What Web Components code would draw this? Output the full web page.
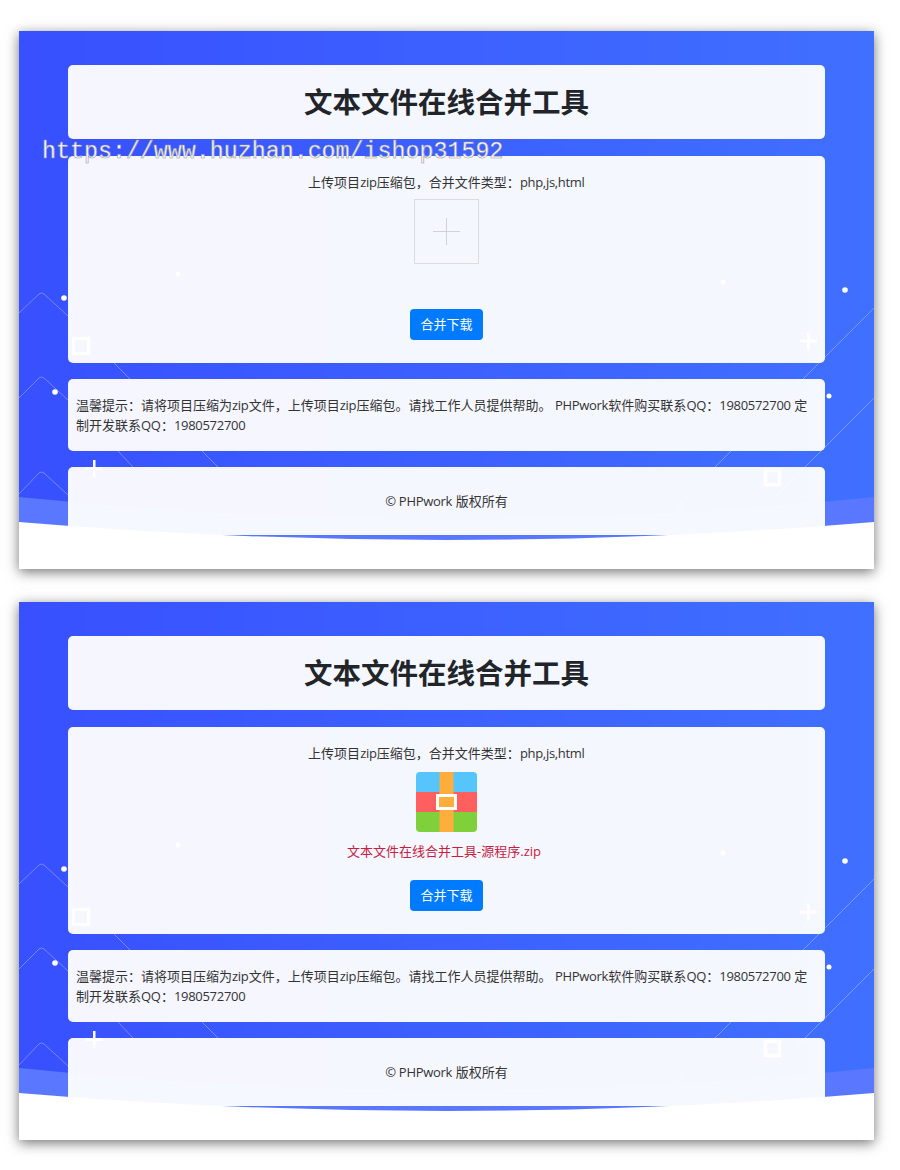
<!DOCTYPE html>
<html lang="zh">
<head>
<meta charset="utf-8">
<title>文本文件在线合并工具</title>
<style>
  html, body { margin: 0; background: #fff; }
  body {
    font-family: "Open Sans", "Noto Sans CJK SC", sans-serif;
    font-size: 13px;
    line-height: 20px;
    color: #333;
    padding: 31px 26px 0 19px;
  }
  /* Latin runs are a bit narrower in the original */
  .l { letter-spacing: -0.3px; padding-right: 0.3px; }
</style>
</head>
<body>

<tool-panel>
  <water-mark>https://www.huzhan.com/ishop31592</water-mark>
  <tool-card kind="title">文本文件在线合并工具</tool-card>
  <tool-card kind="form">
    <div>上传项目<span class="l">zip</span>压缩包，合并文件类型：<span class="l">php,js,html</span></div>
    <upload-box></upload-box>
    <merge-button>合并下载</merge-button>
  </tool-card>
  <tool-card kind="note">温馨提示：请将项目压缩为<span class="l">zip</span>文件，上传项目<span class="l">zip</span>压缩包。请找工作人员提供帮助。 <span class="l">PHPwork</span>软件购买联系<span class="l">QQ</span>：<span class="l">1980572700</span> 定<span>制开发联系</span><span class="l">QQ</span>：<span class="l">1980572700</span></tool-card>
  <tool-card kind="foot"><span class="l">© PHPwork</span> 版权所有</tool-card>
</tool-panel>

<tool-panel>
  <tool-card kind="title">文本文件在线合并工具</tool-card>
  <tool-card kind="form">
    <div>上传项目<span class="l">zip</span>压缩包，合并文件类型：<span class="l">php,js,html</span></div>
    <upload-box filename="文本文件在线合并工具-源程序.zip"></upload-box>
    <merge-button>合并下载</merge-button>
  </tool-card>
  <tool-card kind="note">温馨提示：请将项目压缩为<span class="l">zip</span>文件，上传项目<span class="l">zip</span>压缩包。请找工作人员提供帮助。 <span class="l">PHPwork</span>软件购买联系<span class="l">QQ</span>：<span class="l">1980572700</span> 定<span>制开发联系</span><span class="l">QQ</span>：<span class="l">1980572700</span></tool-card>
  <tool-card kind="foot"><span class="l">© PHPwork</span> 版权所有</tool-card>
</tool-panel>

<script>
// Panel: blue background with its decorations, cards go in the slot
class ToolPanel extends HTMLElement {
  constructor() {
    super();
    this.attachShadow({ mode: 'open' });
  }

  connectedCallback() {
    this.shadowRoot.innerHTML = `
      <style>
        :host {
          display: block;
          position: relative;
          width: 855px;
          height: 538px;
          margin-bottom: 33px;
          box-shadow: 0 3px 12px rgba(0,0,0,0.55);
        }
        .bg {
          position: absolute;
          inset: 0;
          width: 100%;
          height: 100%;
          display: block;
        }
        .cards {
          position: relative;
          height: 100%;
          box-sizing: border-box;
          padding: 33.500px 49px 0;
          display: flex;
          flex-direction: column;
          gap: 16.500px;
          overflow: hidden;
        }
      </style>
      <svg class="bg" viewBox="0 0 855 538">
        <defs>
          <linearGradient id="blue" x1="0" y1="0" x2="1" y2="0">
            <stop offset="0" stop-color="#3850ff"/>
            <stop offset="1" stop-color="#4070ff"/>
          </linearGradient>
        </defs>
        <rect width="855" height="538" fill="url(#blue)"/>
        <g fill="none" stroke="#fff" stroke-opacity="0.3" stroke-width="1">
          <path d="M0 282 L20 263 Q22.500 261 25 263 L49 285 L94 331 L112 349"/>
          <path d="M0 367 L20 347 Q22.500 345 25 347 L49 369 L98 419 L114 436"/>
          <path d="M0 463 L20 442 Q22.500 440 25 442 L49 464"/>
          <path d="M182 419 L199 436"/>
          <path d="M855 277 L696 436 Q676 456 664 470 L656 486"/>
          <path d="M855 367 L786 436 L750 472"/>
        </g>
        <g fill="#fff">
          <circle cx="45" cy="267" r="2.800"/>
          <circle cx="36" cy="361" r="2.800"/>
          <circle cx="159" cy="243" r="2.500"/>
          <circle cx="704" cy="251" r="2.500"/>
          <circle cx="826" cy="259" r="2.800"/>
          <circle cx="810" cy="365" r="2.500"/>
          <path d="M781 308.500h7v-7h3v7h7v3h-7v7h-3v-7h-7z"/>
          <path d="M67 436h7v-7h2.500v7h7v3h-7v7h-2.500v-7h-7z"/>
        </g>
        <g fill="none" stroke="#fff" stroke-width="3.500">
          <rect x="54.500" y="307.500" width="15" height="15"/>
          <rect x="746.500" y="439.500" width="14" height="14"/>
        </g>
        <path d="M0 466 Q427 510 855 466 V538 H0 Z" fill="#5a78ff"/>
        <path d="M0 491 Q427 527 855 491 V538 H0 Z" fill="#fff"/>
      </svg>
      <div class="cards"><slot></slot></div>
    `;
  }
}

// Translucent white card, kind picks the padding and text style
class ToolCard extends HTMLElement {
  constructor() {
    super();
    this.attachShadow({ mode: 'open' });
  }

  connectedCallback() {
    this.shadowRoot.innerHTML = `
      <style>
        :host {
          display: block;
          flex: none;
          box-sizing: border-box;
          background: rgba(255,255,255,0.95);
          border-radius: 5px;
        }
        :host([kind="title"]) {
          height: 74.500px;
          display: flex;
          align-items: center;
          justify-content: center;
          font-size: 28.500px;
          font-weight: 700;
          color: #212529;
        }
        :host([kind="form"]) {
          height: 207px;
          padding-top: 16.500px;
          display: flex;
          flex-direction: column;
          align-items: center;
        }
        :host([kind="note"]) {
          height: 71.500px;
          padding: 16px 8px 0;
        }
        :host([kind="foot"]) {
          height: 68px;
          padding-top: 24px;
          text-align: center;
        }
      </style>
      <slot></slot>
    `;
  }
}

// Upload spot: empty square with a plus, or the zip icon and its file name
class UploadBox extends HTMLElement {
  constructor() {
    super();
    this.attachShadow({ mode: 'open' });
  }

  connectedCallback() {
    const filename = this.getAttribute('filename');
    const inner = filename
      ? `<zip-icon></zip-icon><div class="name">${filename}</div>`
      : `<div class="empty">
           <svg width="27" height="27" viewBox="0 0 27 27">
             <path d="M13.500 0V27M0 13.500H27" stroke="#d2d2d6" stroke-width="1" fill="none"/>
           </svg>
         </div>`;
    this.shadowRoot.innerHTML = `
      <style>
        :host {
          display: flex;
          flex-direction: column;
          align-items: center;
          height: 110px;
          margin-top: 7px;
        }
        .empty {
          width: 65px;
          height: 65px;
          box-sizing: border-box;
          border: 1px solid #dcdcdc;
          display: flex;
          align-items: center;
          justify-content: center;
        }
        .name {
          margin: 9px 5px 0 0;
          color: #c5203f;
        }
      </style>
      ${inner}
    `;
  }
}

// Archive icon with the coloured bands and the buckle
class ZipIcon extends HTMLElement {
  constructor() {
    super();
    this.attachShadow({ mode: 'open' });
  }

  connectedCallback() {
    this.shadowRoot.innerHTML = `
      <style>
        :host { display: block; width: 61px; height: 60px; margin-top: 2px; }
        svg { display: block; }
      </style>
      <svg width="61" height="60" viewBox="0 0 61 60">
        <clipPath id="round"><rect width="61" height="60" rx="4"/></clipPath>
        <g clip-path="url(#round)">
          <rect width="61" height="20" fill="#55c5fb"/>
          <rect y="20" width="61" height="20" fill="#ff5f5f"/>
          <rect y="40" width="61" height="20" fill="#80d03c"/>
          <rect x="23.500" width="14" height="60" fill="#ffad3d"/>
          <rect x="21.500" y="23.500" width="18" height="13" fill="#ffad3d" stroke="#fff" stroke-width="3"/>
        </g>
      </svg>
    `;
  }
}

class MergeButton extends HTMLElement {
  constructor() {
    super();
    this.attachShadow({ mode: 'open' });
  }

  connectedCallback() {
    this.shadowRoot.innerHTML = `
      <style>
        :host {
          display: block;
          box-sizing: border-box;
          height: 31px;
          padding: 0 10.500px;
          line-height: 31px;
          background: #007bff;
          color: #fff;
          border-radius: 4px;
          cursor: pointer;
        }
      </style>
      <slot></slot>
    `;
  }
}

// Marketplace watermark lying over the first panel
class WaterMark extends HTMLElement {
  constructor() {
    super();
    this.attachShadow({ mode: 'open' });
  }

  connectedCallback() {
    this.shadowRoot.innerHTML = `
      <style>
        :host {
          position: absolute;
          left: 23px;
          top: 106px;
          z-index: 2;
          font-family: "Liberation Mono", monospace;
          font-size: 23.300px;
          line-height: 30px;
          white-space: nowrap;
          color: #fff;
          -webkit-text-stroke: 0.6px #9a9aa5;
        }
      </style>
      <slot></slot>
    `;
  }
}

customElements.define('tool-panel', ToolPanel);
customElements.define('tool-card', ToolCard);
customElements.define('upload-box', UploadBox);
customElements.define('zip-icon', ZipIcon);
customElements.define('merge-button', MergeButton);
customElements.define('water-mark', WaterMark);
</script>
</body>
</html>
